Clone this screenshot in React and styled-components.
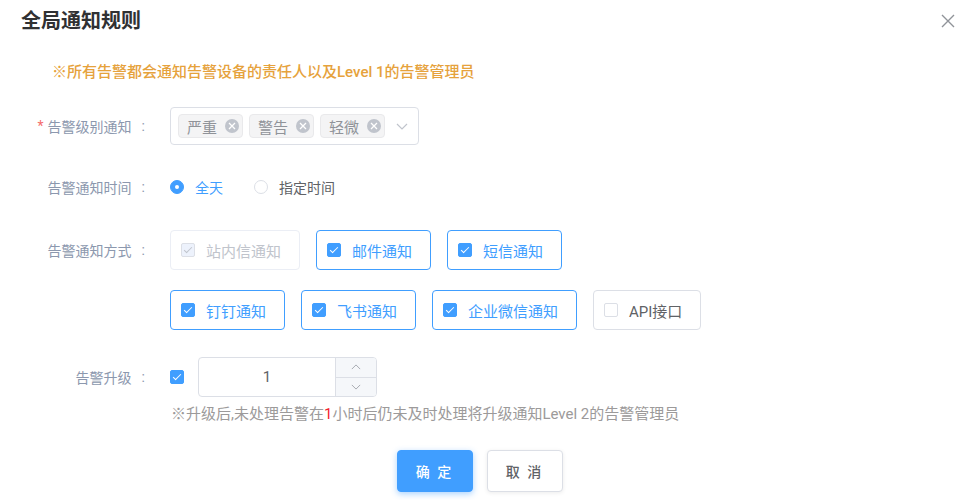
import React from "react";
import styled, { createGlobalStyle } from "styled-components";

const GlobalStyle = createGlobalStyle`
  html, body {
    margin: 0;
    padding: 0;
    background: #fff;
  }
  body {
    font-family: Roboto, "Noto Sans CJK SC", sans-serif;
    color: #606266;
  }
  * {
    box-sizing: border-box;
  }
`;

const Dialog = styled.div`
  width: 964px;
  height: 500px;
  background: #fff;
  overflow: hidden;
`;

const Header = styled.div`
  height: 42px;
  display: flex;
  align-items: center;
  justify-content: space-between;
  padding: 0 9px 0 21px;
`;

const Title = styled.h2`
  margin: 0;
  font-size: 20px;
  line-height: 24px;
  font-weight: 700;
  color: #303133;
`;

const CloseButton = styled.button`
  width: 14px;
  height: 14px;
  padding: 0;
  border: 0;
  background: none;
  display: flex;
  cursor: pointer;
`;

const Body = styled.div`
  padding: 0 20px;
`;

const Notice = styled.p`
  margin: 20px 0 0;
  padding-left: 32px;
  font-size: 15px;
  line-height: 20px;
  font-weight: 500;
  color: #e6a23c;
`;

const FormItem = styled.div`
  display: flex;
  align-items: flex-start;
  margin-top: ${(p) => p.$gap}px;
`;

const Label = styled.label`
  flex: 0 0 150px;
  height: ${(p) => p.$h || 40}px;
  padding-right: 25px;
  display: flex;
  align-items: center;
  justify-content: flex-end;
  font-size: 14px;
  color: #8c98ae;
  white-space: nowrap;
`;

const Star = styled.span`
  color: #f56c6c;
  margin-right: 4px;
`;

const Colon = styled.span`
  margin-left: 10px;
`;

// select with tags
const SelectBox = styled.div`
  width: 249px;
  height: 38px;
  border: 1px solid #dcdfe6;
  border-radius: 4px;
  padding-left: 7px;
  display: flex;
  align-items: center;
  gap: 6px;
`;

const Tag = styled.span`
  height: 24px;
  padding: 0 3px 0 8px;
  display: flex;
  align-items: center;
  gap: 8px;
  background: #f4f4f5;
  border: 1px solid #e9e9eb;
  border-radius: 4px;
  font-size: 15px;
  color: #909399;
`;

const TagClose = styled.span`
  width: 14px;
  height: 14px;
  border-radius: 50%;
  background: #c0c4cc;
  display: flex;
  align-items: center;
  justify-content: center;
`;

const Arrow = styled.span`
  margin-left: auto;
  margin-right: 10px;
  display: flex;
`;

// radios
const RadioGroup = styled.div`
  height: 40px;
  display: flex;
  align-items: center;
`;

const Radio = styled.label`
  display: flex;
  align-items: center;
  margin-right: 31px;
  font-size: 14px;
  color: ${(p) => (p.$checked ? "#409eff" : "#606266")};
`;

const RadioDot = styled.span`
  width: 14px;
  height: 14px;
  border-radius: 50%;
  margin-right: 11px;
  border: 1px solid ${(p) => (p.$checked ? "#409eff" : "#dcdfe6")};
  background: ${(p) => (p.$checked ? "#409eff" : "#fff")};
  display: flex;
  align-items: center;
  justify-content: center;
  &::after {
    content: "";
    width: 4px;
    height: 4px;
    border-radius: 50%;
    background: #fff;
  }
`;

// checkboxes
const CheckGroup = styled.div`
  display: flex;
  flex-direction: column;
  gap: 20px;
`;

const CheckRow = styled.div`
  display: flex;
  gap: 16px;
`;

const CheckItem = styled.label`
  height: 40px;
  padding: 0 18px 0 10px;
  display: flex;
  align-items: center;
  border-radius: 4px;
  font-size: 15px;
  border: 1px solid
    ${(p) => (p.$disabled ? "#ebeef5" : p.$checked ? "#409eff" : "#dcdfe6")};
  color: ${(p) => (p.$disabled ? "#c0c4cc" : p.$checked ? "#409eff" : "#606266")};
`;

const Box = styled.span`
  position: relative;
  flex: 0 0 auto;
  width: ${(p) => p.$size || 14}px;
  height: ${(p) => p.$size || 14}px;
  border-radius: 2px;
  border: 1px solid
    ${(p) => (p.$disabled ? "#dcdfe6" : p.$checked ? "#409eff" : "#dcdfe6")};
  background: ${(p) => (p.$disabled ? "#edf2fc" : p.$checked ? "#409eff" : "#fff")};
  &::after {
    content: "";
    display: ${(p) => (p.$checked ? "block" : "none")};
    position: absolute;
    left: 4px;
    top: 1px;
    width: 3px;
    height: 7px;
    border: 1px solid ${(p) => (p.$disabled ? "#c0c4cc" : "#fff")};
    border-left: 0;
    border-top: 0;
    transform: rotate(45deg);
  }
`;

const CheckText = styled.span`
  margin-left: 11px;
  white-space: nowrap;
`;

// escalation
const Column = styled.div`
  display: flex;
  flex-direction: column;
`;

const InlineRow = styled.div`
  height: 40px;
  display: flex;
  align-items: center;
  gap: 14px;
`;

const NumberInput = styled.div`
  width: 179px;
  height: 40px;
  border: 1px solid #dcdfe6;
  border-radius: 4px;
  display: flex;
  overflow: hidden;
`;

const NumberValue = styled.div`
  flex: 1;
  display: flex;
  align-items: center;
  justify-content: center;
  font-size: 15px;
  color: #606266;
`;

const Controls = styled.div`
  width: 41px;
  display: flex;
  flex-direction: column;
  border-left: 1px solid #dcdfe6;
  background: #f5f7fa;
`;

const Step = styled.div`
  flex: 1;
  display: flex;
  align-items: center;
  justify-content: center;
  & + & {
    border-top: 1px solid #dcdfe6;
  }
`;

const Hint = styled.p`
  margin: 7px 0 0 1px;
  font-size: 15px;
  line-height: 20px;
  color: #9c9a9a;
  white-space: nowrap;
`;

const Red = styled.span`
  color: #f5222d;
`;

const Footer = styled.div`
  margin-top: 26px;
  padding-right: 5px;
  display: flex;
  justify-content: center;
  gap: 14px;
`;

const Button = styled.button`
  width: 76px;
  height: 42px;
  border-radius: 4px;
  font-family: inherit;
  font-size: 14px;
  font-weight: 500;
  letter-spacing: 2px;
  cursor: pointer;
  border: 1px solid ${(p) => (p.$primary ? "#409eff" : "#dcdfe6")};
  background: ${(p) => (p.$primary ? "#409eff" : "#fff")};
  color: ${(p) => (p.$primary ? "#fff" : "#606266")};
  box-shadow: ${(p) =>
    p.$primary ? "0 2px 6px rgba(64,158,255,0.45)" : "0 1px 4px rgba(0,0,0,0.08)"};
`;

const Chevron = ({ up, w = 12, color = "#c0c4cc" }) => (
  <svg width={w} height={w / 2 + 1} viewBox="0 0 12 7" fill="none">
    <polyline
      points={up ? "1,6 6,1 11,6" : "1,1 6,6 11,1"}
      stroke={color}
      strokeWidth="1.2"
    />
  </svg>
);

const levels = ["严重", "警告", "轻微"];

const rows = [
  [
    { text: "站内信通知", checked: true, disabled: true },
    { text: "邮件通知", checked: true },
    { text: "短信通知", checked: true },
  ],
  [
    { text: "钉钉通知", checked: true },
    { text: "飞书通知", checked: true },
    { text: "企业微信通知", checked: true },
    { text: "API接口", checked: false },
  ],
];

export default function App() {
  return (
    <Dialog>
      <GlobalStyle />
      <Header>
        <Title>全局通知规则</Title>
        <CloseButton aria-label="close">
          <svg width="14" height="14" viewBox="0 0 14 14">
            <path d="M1 1L13 13M13 1L1 13" stroke="#909399" strokeWidth="1.4" />
          </svg>
        </CloseButton>
      </Header>
      <Body>
        <Notice>※所有告警都会通知告警设备的责任人以及Level 1的告警管理员</Notice>

        <FormItem $gap={25}>
          <Label $h={38}>
            <Star>*</Star>告警级别通知<Colon>:</Colon>
          </Label>
          <SelectBox>
            {levels.map((l) => (
              <Tag key={l}>
                {l}
                <TagClose>
                  <svg width="8" height="8" viewBox="0 0 8 8">
                    <path d="M1 1L7 7M7 1L1 7" stroke="#fff" strokeWidth="1.3" />
                  </svg>
                </TagClose>
              </Tag>
            ))}
            <Arrow>
              <Chevron />
            </Arrow>
          </SelectBox>
        </FormItem>

        <FormItem $gap={22}>
          <Label>
            告警通知时间<Colon>:</Colon>
          </Label>
          <RadioGroup>
            <Radio $checked>
              <RadioDot $checked />
              全天
            </Radio>
            <Radio>
              <RadioDot />
              指定时间
            </Radio>
          </RadioGroup>
        </FormItem>

        <FormItem $gap={23}>
          <Label>
            告警通知方式<Colon>:</Colon>
          </Label>
          <CheckGroup>
            {rows.map((row, i) => (
              <CheckRow key={i}>
                {row.map((c) => (
                  <CheckItem key={c.text} $checked={c.checked} $disabled={c.disabled}>
                    <Box $checked={c.checked} $disabled={c.disabled} />
                    <CheckText>{c.text}</CheckText>
                  </CheckItem>
                ))}
              </CheckRow>
            ))}
          </CheckGroup>
        </FormItem>

        <FormItem $gap={27}>
          <Label>
            告警升级<Colon>:</Colon>
          </Label>
          <Column>
            <InlineRow>
              <Box $checked />
              <NumberInput>
                <NumberValue>1</NumberValue>
                <Controls>
                  <Step>
                    <Chevron up w={10} color="#a8abb2" />
                  </Step>
                  <Step>
                    <Chevron w={10} color="#a8abb2" />
                  </Step>
                </Controls>
              </NumberInput>
            </InlineRow>
            <Hint>
              ※升级后,未处理告警在<Red>1</Red>小时后仍未及时处理将升级通知Level 2的告警管理员
            </Hint>
          </Column>
        </FormItem>

        <Footer>
          <Button $primary>确 定</Button>
          <Button>取 消</Button>
        </Footer>
      </Body>
    </Dialog>
  );
}
